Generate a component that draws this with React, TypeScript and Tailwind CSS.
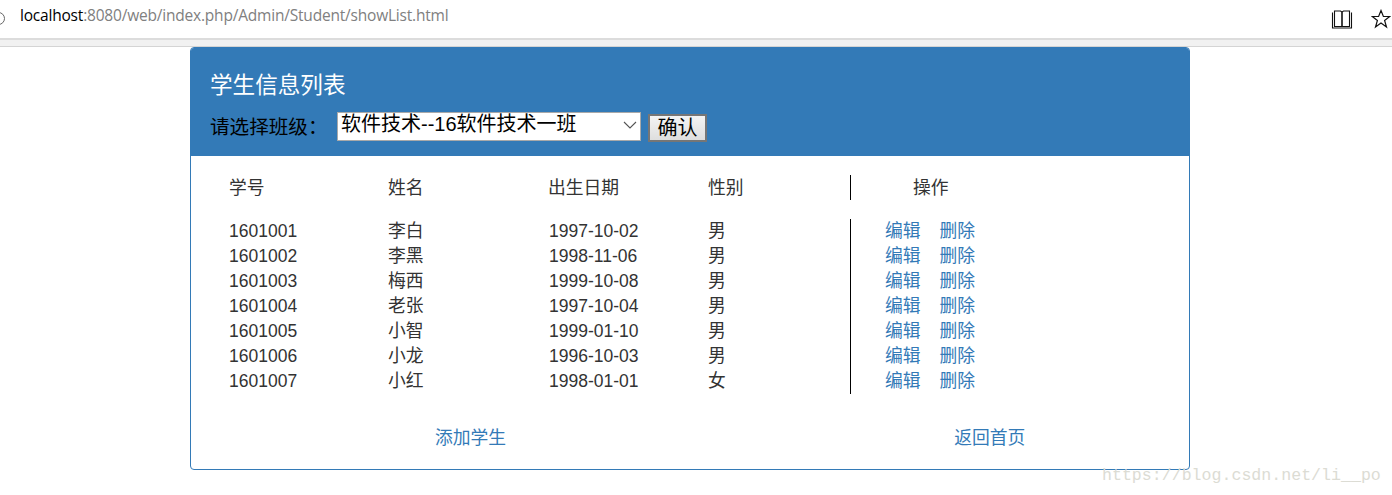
import React from "react";

const students = [
  { id: "1601001", name: "李白", birth: "1997-10-02", sex: "男" },
  { id: "1601002", name: "李黑", birth: "1998-11-06", sex: "男" },
  { id: "1601003", name: "梅西", birth: "1999-10-08", sex: "男" },
  { id: "1601004", name: "老张", birth: "1997-10-04", sex: "男" },
  { id: "1601005", name: "小智", birth: "1999-01-10", sex: "男" },
  { id: "1601006", name: "小龙", birth: "1996-10-03", sex: "男" },
  { id: "1601007", name: "小红", birth: "1998-01-01", sex: "女" },
];

const App = () => {
  return (
    <main className="relative h-[495px] overflow-hidden bg-white font-['Liberation_Sans','Noto_Sans_CJK_SC',sans-serif] text-[17.5px] text-[#333]">
      {/* Browser bar */}
      <header className="flex h-[40px] items-start justify-between border-b-2 border-[#dcdcdc]">
        <div className="flex items-center pt-[5px] font-['Open_Sans','Liberation_Sans',sans-serif] text-[15.5px] leading-[20px] tracking-[-0.2px]">
          <span className="-ml-[8px] mr-[15px] mt-[6px] h-[13px] w-[13px] rounded-full border border-[#666]" />
          <span className="text-black">localhost</span>
          <span className="text-[#808080]">:8080/web/index.php/Admin/Student/showList.html</span>
        </div>
        <div className="flex items-center gap-[18px] pt-[9px] pr-[1px]">
          <svg width="22" height="20" viewBox="0 0 22 20" fill="none" stroke="#111" strokeWidth="1.1">
            <path d="M3.5 2h6l1.5 1v14.5H3.5z" />
            <path d="M18.5 2h-6L11 3v14.5h7.5z" />
            <path d="M1.5 3.5v15.5h19V3.5" />
          </svg>
          <svg width="20" height="20" viewBox="0 0 20 20" fill="none" stroke="#111" strokeWidth="1.2">
            <path d="M10 1.5l2.4 6h6.3l-5.1 4 1.9 6.5-5.5-3.9-5.5 3.9 1.9-6.5-5.1-4h6.3z" />
          </svg>
        </div>
      </header>
      <div className="h-[7px] border-b border-[#d4d4d4] bg-[#f1f1f1]" />

      {/* Panel */}
      <section className="ml-[190px] h-[423px] w-[1000px] overflow-hidden rounded-[4px] border border-[#337ab7]">
        <div className="h-[108px] bg-[#337ab7] pl-[19px] pt-[22px]">
          <h3 className="text-[22.6px] leading-[32px] text-white">学生信息列表</h3>
          <div className="mt-[10px] flex items-start">
            <label className="mt-[2px] w-[127px] text-[19.6px] leading-[26px] text-black">请选择班级：</label>
            <div className="relative h-[29px] w-[304px] border border-[#a9a9a9] bg-white pl-[3px] text-[20px] leading-[22px] text-black">
              软件技术--16软件技术一班
              <svg className="absolute right-[3px] top-[8px]" width="14" height="8" viewBox="0 0 14 8" fill="none" stroke="#555" strokeWidth="1.1">
                <path d="M1 1l6 6 6-6" />
              </svg>
            </div>
            <button className="ml-[7px] mt-[2px] h-[28px] w-[59px] border-2 border-[#767676] bg-gradient-to-b from-[#f4f4f4] to-[#dedede] text-[20px] leading-[24px] text-black">
              确认
            </button>
          </div>
        </div>

        {/* Table */}
        <div className="pl-[38px] pt-[19px]">
          <div className="flex h-[25px] items-center text-[17.8px] leading-[25px]">
            <span className="mt-[2px] w-[159px]">学号</span>
            <span className="mt-[2px] w-[160px]">姓名</span>
            <span className="mt-[2px] w-[160px]">出生日期</span>
            <span className="mt-[2px] w-[142px]">性别</span>
            <span className="flex h-[25px] items-center border-l border-black pl-[62px]">
              <span className="mt-[2px]">操作</span>
            </span>
          </div>
          <div className="mt-[19px]">
            {students.map((s) => (
              <div key={s.id} className="flex h-[25px] items-center leading-[25px]">
                <span className="w-[159px]">{s.id}</span>
                <span className="w-[161px] text-[17.8px]">{s.name}</span>
                <span className="w-[159px]">{s.birth}</span>
                <span className="w-[142px] text-[17.8px]">{s.sex}</span>
                <span className="flex h-[25px] border-l border-black pl-[34px] text-[17.8px] text-[#337ab7]">
                  <a className="mr-[19px]">编辑</a>
                  <a>删除</a>
                </span>
              </div>
            ))}
          </div>
        </div>

        <div className="mt-[31px] flex text-[17.8px] text-[#337ab7]">
          <a className="ml-[244px]">添加学生</a>
          <a className="ml-[448px]">返回首页</a>
        </div>
      </section>

      {/* Watermark */}
      <span className="absolute left-[1102px] top-[466px] font-['Liberation_Mono',monospace] text-[16.6px] leading-[20px] text-[#dcdcd4]">
        https://blog.csdn.net/li__po
      </span>
    </main>
  );
};

export default App;
